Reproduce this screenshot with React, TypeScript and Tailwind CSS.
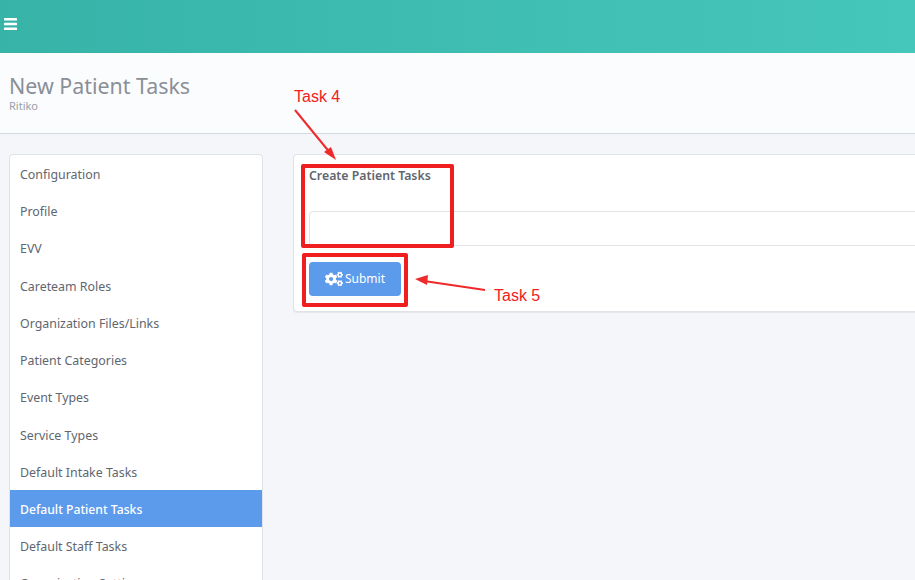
import { FaCogs } from "react-icons/fa";

const menuItems = [
  "Configuration",
  "Profile",
  "EVV",
  "Careteam Roles",
  "Organization Files/Links",
  "Patient Categories",
  "Event Types",
  "Service Types",
  "Default Intake Tasks",
  "Default Patient Tasks",
  "Default Staff Tasks",
  "Organization Settings",
];

function Annotations() {
  return (
    <>
      <span className="absolute left-[294px] top-[88px] font-['Liberation_Sans',sans-serif] text-base leading-[18px] text-[#f02020]">
        Task 4
      </span>
      <span className="absolute left-[494px] top-[287px] font-['Liberation_Sans',sans-serif] text-base leading-[18px] text-[#f02020]">
        Task 5
      </span>
      <div className="absolute left-[301px] top-[164px] h-[84px] w-[153px] rounded-[2px] border-4 border-[#f01f1f]" />
      <div className="absolute left-[302px] top-[253px] h-[54px] w-[106px] rounded-[2px] border-4 border-[#f01f1f]" />
      <svg className="absolute left-0 top-0" width="915" height="580" fill="none">
        <path d="M295 110 L331 154" stroke="#ee2a2a" strokeWidth="2" />
        <path d="M336 160 L324 152 L331 147 Z" fill="#ee2a2a" />
        <path d="M485 290 L424 281" stroke="#ee2a2a" strokeWidth="2" />
        <path d="M415 279 L428 275 L427 285 Z" fill="#ee2a2a" />
      </svg>
    </>
  );
}

export default function App() {
  return (
    <div className="relative h-[580px] w-[915px] overflow-hidden bg-[#f4f6fa] font-['Noto_Sans',sans-serif]">
      <header className="flex h-[53px] items-center bg-gradient-to-r from-[#37b3a8] to-[#46c7bb] pb-[5px] pl-[4px] text-white">
        <svg width="13" height="12" viewBox="0 0 13 12" fill="currentColor">
          <rect width="13" height="2.6" rx="0.6" />
          <rect y="4.7" width="13" height="2.6" rx="0.6" />
          <rect y="9.4" width="13" height="2.6" rx="0.6" />
        </svg>
      </header>

      <div className="h-[81px] border-b border-[#d2d9e0] bg-[#fbfcfe] pl-[9px] pt-[19px]">
        <h1 className="text-[21.4px] leading-[28px] text-[#8a8f96]">New Patient Tasks</h1>
        <p className="text-[11px] leading-[11px] text-[#9a9fa6]">Ritiko</p>
      </div>

      <div className="flex items-start pl-[9px] pt-[20px]">
        <nav className="w-[254px] shrink-0 rounded-t-[4px] border border-[#dfe2e6] bg-white">
          {menuItems.map((item) => (
            <a
              key={item}
              className={
                item === "Default Patient Tasks"
                  ? "block h-[37.22px] bg-[#5c9aec] pl-[10px] text-[12.2px] leading-[39px] font-medium text-white"
                  : "block h-[37.22px] pl-[10px] text-[12.4px] leading-[39px] text-[#5f6670]"
              }
            >
              {item}
            </a>
          ))}
        </nav>

        <main className="ml-[30px] w-[700px] shrink-0 rounded-[4px] border border-[#dfe2e6] bg-white pb-[15px] pl-[15px] pt-[13px] shadow-[0_1px_1px_rgba(0,0,0,0.06)]">
          <label className="block text-[12.3px] leading-[15px] font-semibold text-[#5f6670]">
            Create Patient Tasks
          </label>
          <input className="mt-[28px] block h-[35px] w-full rounded-[4px] border border-[#dfe5e3] bg-white" />
          <button className="mt-[16px] flex h-[34px] w-[92px] items-center justify-center gap-[2px] rounded-[4px] bg-[#5c9aec] text-[12px] text-white">
            <FaCogs className="h-[18px] w-[18px]" />
            Submit
          </button>
        </main>
      </div>

      <Annotations />
    </div>
  );
}
